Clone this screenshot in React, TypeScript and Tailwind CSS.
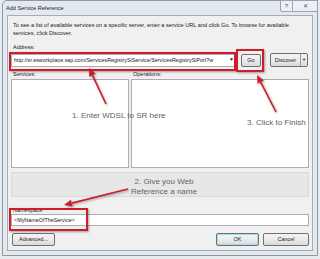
import React from 'react';

function WinButton({ label, className = '' }: { label: string; className?: string }) {
  return (
    <div
      className={`flex h-[13px] items-center justify-center rounded-[2px] border border-[#707070] bg-gradient-to-b from-[#f3f3f3] via-[#ebebeb] to-[#d9d9d9] text-[5.5px] text-[#1a1a1a] ${className}`}
    >
      {label}
    </div>
  );
}

export default function App() {
  const red = '#cf1d2a';

  return (
    <div className="relative h-[259px] w-[320px] overflow-hidden bg-[#e6ebf0] font-['Liberation_Sans',Arial,sans-serif]">
      {/* window frame */}
      <div className="ml-[2px] flex h-[256px] w-[316px] flex-col rounded-t-[5px] border border-[#8c98a4] bg-[#e3e9ef]">
        {/* title bar */}
        <div className="flex h-[14px] items-start justify-between pl-[3px]">
          <span className="text-[5.6px] leading-[15px] text-[#1e1e1e]">Add Service Reference</span>
          <div className="mr-[-1px] mt-[-1px] flex h-[12px]">
            <div className="flex w-[13px] items-center justify-center rounded-bl-[2px] border border-[#9aa4ae] bg-[#edf0f3] text-[6px] text-[#555]">
              ?
            </div>
            <div className="flex w-[25px] items-center justify-center rounded-br-[2px] border border-l-0 border-[#9aa4ae] bg-[#edf0f3] text-[6px] text-[#555]">
              ✕
            </div>
          </div>
        </div>

        {/* client area */}
        <div className="mx-[4px] flex h-[236px] flex-col border border-[#a3adb8] bg-[#f0f0f0] pl-[3px] pr-[3px]">
          <p className="ml-[2px] mt-[5px] text-[5.6px] leading-[8px] text-[#1a1a1a]">
            To see a list of available services on a specific server, enter a service URL and click Go. To browse for available
            <br />
            services, click Discover.
          </p>

          <span className="ml-[2px] mt-[6px] text-[5.5px] leading-[8px] text-[#1a1a1a]">Address:</span>

          <div className="mt-[2px] flex items-center">
            <div className="flex h-[13px] w-[225px] items-center border border-[#abadb3] bg-white pl-[2px]">
              <span className="flex-1 overflow-hidden whitespace-nowrap text-[5.4px] text-[#1a1a1a]">
                http://sr.esworkplace.sap.com/ServicesRegistrySiService/ServicesRegistrySiPort?w
              </span>
              <span className="w-[7px] text-center text-[5px] text-[#222]">▼</span>
            </div>
            <WinButton label="Go" className="ml-[5px] w-[20px]" />
            <div className="ml-[9px] flex h-[14px] w-[38px] rounded-[2px] border border-[#707070] bg-gradient-to-b from-[#f3f3f3] via-[#ebebeb] to-[#d9d9d9] text-[5.5px] text-[#1a1a1a]">
              <span className="flex flex-1 items-center justify-center">Discover</span>
              <span className="flex w-[7px] items-center justify-center border-l border-[#9a9a9a] text-[4px]">▼</span>
            </div>
          </div>

          <div className="mt-[3px] flex text-[5.5px] leading-[8px] text-[#1a1a1a]">
            <span className="ml-[2px] w-[120px]">Services:</span>
            <span>Operations:</span>
          </div>

          <div className="mt-[1px] flex h-[89px] gap-[2px]">
            <div className="w-[118px] border border-[#abadb3] bg-white" />
            <div className="flex-1 border border-[#abadb3] bg-white" />
          </div>

          <div className="mt-[4px] h-[25px] border border-[#d9d9d9] bg-[#e7e7e7]" />

          <span className="ml-[2px] mt-[9px] text-[5.5px] leading-[8px] text-[#1a1a1a]">Namespace:</span>
          <div className="flex h-[12px] items-center border border-[#abadb3] bg-white pl-[2px] text-[5.4px] text-[#1a1a1a]">
            &lt;MyNameOfTheService&gt;
          </div>

          <div className="mt-[7px] flex items-center">
            <WinButton label="Advanced..." className="ml-[1px] w-[43px]" />
            <div className="flex-1" />
            <WinButton label="OK" className="w-[43px] border-[#3c7fb1] shadow-[inset_0_0_0_1px_#9fdcf6]" />
            <WinButton label="Cancel" className="ml-[4px] w-[46px]" />
          </div>
        </div>
      </div>

      {/* annotations */}
      <div className="pointer-events-none absolute left-[9px] top-[52px] h-[19px] w-[227px] border-2 border-[#cf1d2a] shadow-[1px_1px_2px_rgba(0,0,0,0.35)]" />
      <div className="pointer-events-none absolute left-[236px] top-[49px] h-[23px] w-[28px] border-2 border-[#cf1d2a] shadow-[1px_1px_2px_rgba(0,0,0,0.35)]" />
      <div className="pointer-events-none absolute left-[9px] top-[208px] h-[23px] w-[79px] border-2 border-[#cf1d2a] shadow-[1px_1px_2px_rgba(0,0,0,0.35)]" />

      <span className="absolute left-[72px] top-[111px] text-[8px] leading-[10px] text-[#636363]">1. Enter WDSL to SR here</span>
      <span className="absolute left-[247px] top-[118px] text-[8px] leading-[10px] text-[#636363]">3. Click to Finish</span>
      <span className="absolute left-[124px] top-[177px] w-[80px] text-center text-[8px] leading-[10px] text-[#636363]">
        2. Give you Web
        <br />
        Reference a name
      </span>

      <svg
        className="pointer-events-none absolute left-0 top-0 drop-shadow-[1px_1px_1px_rgba(0,0,0,0.35)]"
        width="320"
        height="259"
        viewBox="0 0 320 259"
      >
        <line x1="106" y1="104" x2="92.4" y2="75.2" stroke={red} strokeWidth="1.6" />
        <polygon points="89,68 95.6,73.7 89.2,76.7" fill={red} />
        <line x1="128" y1="189" x2="71.8" y2="203.1" stroke={red} strokeWidth="1.6" />
        <polygon points="64,205 70.9,199.7 72.6,206.5" fill={red} />
        <line x1="276" y1="112" x2="260.7" y2="82.1" stroke={red} strokeWidth="1.6" />
        <polygon points="257,75 263.8,80.5 257.6,83.7" fill={red} />
      </svg>
    </div>
  );
}
